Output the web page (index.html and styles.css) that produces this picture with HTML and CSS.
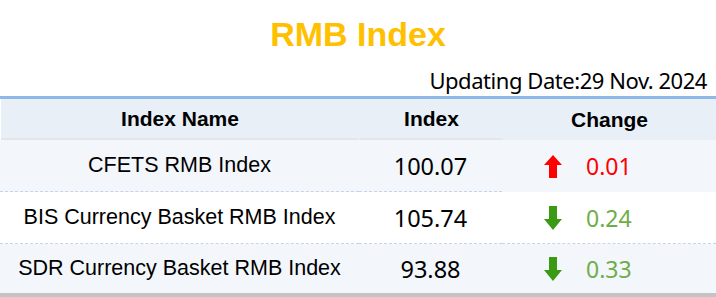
FILE: index.html
```html
<!DOCTYPE html>
<html>
<head>
<meta charset="utf-8">
<link rel="stylesheet" href="styles.css">
</head>
<body>
<div class="page">
  <h1 class="title">RMB Index</h1>
  <div class="date">Updating Date:29 Nov. 2024</div>
  <div class="table">
    <div class="row head">
      <div class="cell c1 hb">Index Name</div>
      <div class="cell c2 hb">Index</div>
      <div class="cell c3">Change</div>
    </div>
    <div class="row r1">
      <div class="cell c1 name db">CFETS RMB Index</div>
      <div class="cell c2 num db">100.07</div>
      <div class="cell c3 chg up">
        <svg class="arrow" width="18" height="23" viewBox="0 0 18 23"><path d="M9 0 L18 10 L13 10 L13 23 L5 23 L5 10 L0 10 Z" fill="#ff0000"/></svg>
        <span>0.01</span>
      </div>
    </div>
    <div class="row r2">
      <div class="cell c1 name db">BIS Currency Basket RMB Index</div>
      <div class="cell c2 num db">105.74</div>
      <div class="cell c3 chg down db">
        <svg class="arrow" width="18" height="24" viewBox="0 0 18 24"><path d="M5 0 L13 0 L13 13 L18 13 L9 24 L0 13 L5 13 Z" fill="#3b9a13"/></svg>
        <span>0.24</span>
      </div>
    </div>
    <div class="row r3">
      <div class="cell c1 name">SDR Currency Basket RMB Index</div>
      <div class="cell c2 num">93.88</div>
      <div class="cell c3 chg down">
        <svg class="arrow" width="18" height="24" viewBox="0 0 18 24"><path d="M5 0 L13 0 L13 13 L18 13 L9 24 L0 13 L5 13 Z" fill="#3b9a13"/></svg>
        <span>0.33</span>
      </div>
    </div>
  </div>
</div>
</body>
</html>
```
FILE: styles.css
```css
html, body {
  margin: 0;
  padding: 0;
  background: #ffffff;
}
.page {
  width: 716px;
}
.title {
  margin: 0;
  padding-top: 14px;
  height: 41px;
  line-height: 40px;
  text-align: center;
  font-family: "Liberation Sans", Arial, sans-serif;
  font-weight: bold;
  font-size: 34px;
  color: #ffc000;
}
.date {
  height: 26px;
  padding: 12px 9px 3px 0;
  line-height: 26px;
  text-align: right;
  font-family: "Noto Sans", sans-serif;
  font-size: 22px;
  letter-spacing: -0.45px;
  color: #000;
}
.table {
  border-top: 3px solid #8db8e8;
  border-bottom: 4px solid #c3c3c3;
}
.row {
  display: grid;
  grid-template-columns: 359px 143px 1fr;
}
.head {
  margin-left: 1px;
  height: 41px;
  background: #e8eff7;
  font-family: "Liberation Sans", Arial, sans-serif;
  font-weight: bold;
  font-size: 21px;
  color: #000;
}
.head .c1 {
  width: 358px;
}
.cell {
  display: flex;
  align-items: center;
  justify-content: center;
  box-sizing: border-box;
}
.hb {
  border-bottom: 2px solid #e3e6ea;
}
.db {
  border-bottom: 1px dashed #c4d5ea;
}
.r1 {
  height: 52px;
  background: #f3f7fc;
}
.r2 {
  height: 52px;
  background: #ffffff;
}
.r3 {
  height: 49px;
  background: #f3f7fc;
}
.name {
  font-family: "Liberation Sans", Arial, sans-serif;
  font-size: 21.5px;
  color: #000;
}
.num {
  font-family: "Noto Sans", sans-serif;
  font-size: 23.5px;
  color: #000;
}
.chg {
  justify-content: flex-start;
  padding-left: 42px;
  gap: 24px;
  font-family: "Noto Sans", sans-serif;
  font-size: 23px;
}
.up {
  color: #ff0000;
}
.down {
  color: #70ad47;
}
.arrow {
  display: block;
  flex: none;
}
```
